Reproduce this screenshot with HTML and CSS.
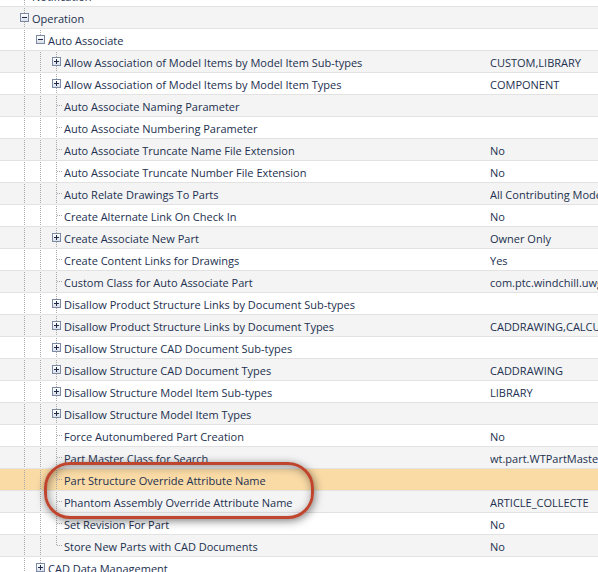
FILE: index.html
```html
<!DOCTYPE html>
<html lang="en">
<head>
<meta charset="UTF-8">
<title>Preferences</title>
<link rel="stylesheet" href="styles.css">
</head>
<body>

<div class="tree">
    <div class="row">
        <div class="name"><span class="pad"></span><span class="cell line"></span><span class="label">Notification</span></div>
        <div class="value"></div>
    </div>
    <div class="row">
        <div class="name"><span class="pad"></span><span class="cell line"><i class="toggle minus"></i></span><span class="label">Operation</span></div>
        <div class="value"></div>
    </div>
    <div class="row">
        <div class="name"><span class="pad"></span><span class="cell line"></span><span class="cell top"><i class="toggle minus"></i></span><span class="label">Auto Associate</span></div>
        <div class="value"></div>
    </div>
    <div class="row">
        <div class="name"><span class="pad"></span><span class="cell line"></span><span class="cell line"></span><span class="cell line"><i class="toggle"></i></span><span class="label">Allow Association of Model Items by Model Item Sub-types</span></div>
        <div class="value">CUSTOM,LIBRARY</div>
    </div>
    <div class="row">
        <div class="name"><span class="pad"></span><span class="cell line"></span><span class="cell line"></span><span class="cell line"><i class="toggle"></i></span><span class="label">Allow Association of Model Items by Model Item Types</span></div>
        <div class="value">COMPONENT</div>
    </div>
    <div class="row">
        <div class="name"><span class="pad"></span><span class="cell line"></span><span class="cell line"></span><span class="cell line stub"></span><span class="label">Auto Associate Naming Parameter</span></div>
        <div class="value"></div>
    </div>
    <div class="row">
        <div class="name"><span class="pad"></span><span class="cell line"></span><span class="cell line"></span><span class="cell line stub"></span><span class="label">Auto Associate Numbering Parameter</span></div>
        <div class="value"></div>
    </div>
    <div class="row">
        <div class="name"><span class="pad"></span><span class="cell line"></span><span class="cell line"></span><span class="cell line stub"></span><span class="label">Auto Associate Truncate Name File Extension</span></div>
        <div class="value">No</div>
    </div>
    <div class="row">
        <div class="name"><span class="pad"></span><span class="cell line"></span><span class="cell line"></span><span class="cell line stub"></span><span class="label">Auto Associate Truncate Number File Extension</span></div>
        <div class="value">No</div>
    </div>
    <div class="row">
        <div class="name"><span class="pad"></span><span class="cell line"></span><span class="cell line"></span><span class="cell line stub"></span><span class="label">Auto Relate Drawings To Parts</span></div>
        <div class="value">All Contributing Models</div>
    </div>
    <div class="row">
        <div class="name"><span class="pad"></span><span class="cell line"></span><span class="cell line"></span><span class="cell line stub"></span><span class="label">Create Alternate Link On Check In</span></div>
        <div class="value">No</div>
    </div>
    <div class="row">
        <div class="name"><span class="pad"></span><span class="cell line"></span><span class="cell line"></span><span class="cell line"><i class="toggle"></i></span><span class="label">Create Associate New Part</span></div>
        <div class="value">Owner Only</div>
    </div>
    <div class="row">
        <div class="name"><span class="pad"></span><span class="cell line"></span><span class="cell line"></span><span class="cell line stub"></span><span class="label">Create Content Links for Drawings</span></div>
        <div class="value">Yes</div>
    </div>
    <div class="row">
        <div class="name"><span class="pad"></span><span class="cell line"></span><span class="cell line"></span><span class="cell line stub"></span><span class="label">Custom Class for Auto Associate Part</span></div>
        <div class="value">com.ptc.windchill.uwgm</div>
    </div>
    <div class="row">
        <div class="name"><span class="pad"></span><span class="cell line"></span><span class="cell line"></span><span class="cell line"><i class="toggle"></i></span><span class="label">Disallow Product Structure Links by Document Sub-types</span></div>
        <div class="value"></div>
    </div>
    <div class="row">
        <div class="name"><span class="pad"></span><span class="cell line"></span><span class="cell line"></span><span class="cell line"><i class="toggle"></i></span><span class="label">Disallow Product Structure Links by Document Types</span></div>
        <div class="value">CADDRAWING,CALCULATION</div>
    </div>
    <div class="row">
        <div class="name"><span class="pad"></span><span class="cell line"></span><span class="cell line"></span><span class="cell line"><i class="toggle"></i></span><span class="label">Disallow Structure CAD Document Sub-types</span></div>
        <div class="value"></div>
    </div>
    <div class="row">
        <div class="name"><span class="pad"></span><span class="cell line"></span><span class="cell line"></span><span class="cell line"><i class="toggle"></i></span><span class="label">Disallow Structure CAD Document Types</span></div>
        <div class="value">CADDRAWING</div>
    </div>
    <div class="row">
        <div class="name"><span class="pad"></span><span class="cell line"></span><span class="cell line"></span><span class="cell line"><i class="toggle"></i></span><span class="label">Disallow Structure Model Item Sub-types</span></div>
        <div class="value">LIBRARY</div>
    </div>
    <div class="row">
        <div class="name"><span class="pad"></span><span class="cell line"></span><span class="cell line"></span><span class="cell line"><i class="toggle"></i></span><span class="label">Disallow Structure Model Item Types</span></div>
        <div class="value"></div>
    </div>
    <div class="row">
        <div class="name"><span class="pad"></span><span class="cell line"></span><span class="cell line"></span><span class="cell line stub"></span><span class="label">Force Autonumbered Part Creation</span></div>
        <div class="value">No</div>
    </div>
    <div class="row">
        <div class="name"><span class="pad"></span><span class="cell line"></span><span class="cell line"></span><span class="cell line stub"></span><span class="label">Part Master Class for Search</span></div>
        <div class="value">wt.part.WTPartMaster</div>
    </div>
    <div class="row selected">
        <div class="name"><span class="pad"></span><span class="cell line"></span><span class="cell line"></span><span class="cell line stub"></span><span class="label">Part Structure Override Attribute Name</span></div>
        <div class="value"></div>
        <div class="ring"></div>
    </div>
    <div class="row">
        <div class="name"><span class="pad"></span><span class="cell line"></span><span class="cell line"></span><span class="cell line stub"></span><span class="label">Phantom Assembly Override Attribute Name</span></div>
        <div class="value">ARTICLE_COLLECTE</div>
    </div>
    <div class="row">
        <div class="name"><span class="pad"></span><span class="cell line"></span><span class="cell line"></span><span class="cell line stub"></span><span class="label">Set Revision For Part</span></div>
        <div class="value">No</div>
    </div>
    <div class="row">
        <div class="name"><span class="pad"></span><span class="cell line"></span><span class="cell line"></span><span class="cell top stub"></span><span class="label">Store New Parts with CAD Documents</span></div>
        <div class="value">No</div>
    </div>
    <div class="row">
        <div class="name"><span class="pad"></span><span class="cell line"></span><span class="cell line"><i class="toggle"></i></span><span class="label">CAD Data Management</span></div>
        <div class="value"></div>
    </div>
</div>

</body>
</html>
```

FILE: styles.css
```css
body {
    margin: 0;
    background: #fff;
    color: #22304f;
    font-family: "Open Sans", "Noto Sans", sans-serif;
    font-size: 11px;
    overflow: hidden;
}

.tree { margin-top: -16px; }

.row {
    display: grid;
    grid-template-columns: 490px 1fr;
    height: 22px;
    box-sizing: border-box;
    border-top: 1px solid #e2e2e2;
    background: #fff;
    position: relative;
}
.row:nth-child(even) { background: #f4f4f4; }
.row.selected { background: #fadba6; }

.name, .value {
    display: flex;
    align-items: center;
    white-space: nowrap;
    overflow: hidden;
}
.label, .value { padding-top: 1px; }

/* tree guides: one 16px cell per nesting level */
.pad { width: 16px; flex: none; align-self: stretch; }
.cell {
    width: 16px;
    flex: none;
    align-self: stretch;
    margin-top: -1px;
    position: relative;
}
.cell.line::before,
.cell.top::before {
    content: "";
    position: absolute;
    left: 8px;
    top: 0;
    bottom: 0;
    width: 1px;
    background: linear-gradient(to bottom, #a8a8a8 50%, transparent 50%);
    background-size: 1px 2px;
}
.cell.top::before { bottom: 50%; }
.cell.stub::after {
    content: "";
    position: absolute;
    left: 9px;
    width: 6px;
    top: 11px;
    height: 1px;
    background: linear-gradient(to right, #a8a8a8 50%, transparent 50%);
    background-size: 2px 1px;
}

/* expand / collapse box */
.toggle {
    position: absolute;
    left: 4px;
    top: 7px;
    width: 9px;
    height: 9px;
    box-sizing: border-box;
    border: 1px solid #7c8ba4;
    background: linear-gradient(#fff, #d9dee8);
    z-index: 1;
}
.toggle::before,
.toggle::after {
    content: "";
    position: absolute;
    background: #1f2a48;
}
.toggle::before { left: 1px; top: 3px; width: 5px; height: 1px; }
.toggle::after { left: 3px; top: 1px; width: 1px; height: 5px; }
.toggle.minus::after { display: none; }

/* red marker drawn over the two override rows */
.ring {
    position: absolute;
    left: 44px;
    top: -7px;
    width: 270px;
    height: 57px;
    box-sizing: border-box;
    border: 3px solid #bf452f;
    border-radius: 26px;
    box-shadow: 1px 2px 8px rgba(0,0,0,0.5), inset 1px 2px 8px rgba(0,0,0,0.4);
    pointer-events: none;
    z-index: 2;
}
```
